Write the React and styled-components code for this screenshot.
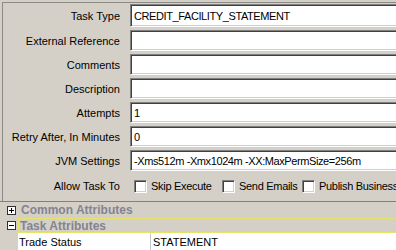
import React from "react";
import styled, { createGlobalStyle } from "styled-components";

const GlobalStyle = createGlobalStyle`
  html, body {
    margin: 0;
    padding: 0;
    background: #d4d0c8;
    overflow: hidden;
  }
  body {
    font-family: "Liberation Sans", Arial, sans-serif;
    font-size: 11px;
    color: #000;
  }
`;

const Screen = styled.div`
  width: 396px;
  height: 250px;
  overflow: hidden;
  display: flex;
  flex-direction: column;
`;

const FormPanel = styled.div`
  margin: 2px 0 0 2px;
  border-top: 1px solid #8c8a84;
  border-left: 1px solid #8c8a84;
  height: 199px;
  box-sizing: border-box;
  padding-top: 1px;
  display: grid;
  grid-template-columns: 117px 1fr;
  column-gap: 10px;
  row-gap: 3px;
  grid-auto-rows: 21px;
  grid-template-rows: 23px;
`;

const Label = styled.div`
  display: flex;
  align-items: center;
  justify-content: flex-end;
  white-space: nowrap;
  margin-top: ${({ $offset }) => $offset || 0}px;
`;

const Field = styled.div`
  box-sizing: border-box;
  background: #fff;
  border: 1px solid;
  border-color: #808080 #ffffff #ffffff #808080;
  box-shadow: inset 1px 1px #404040, inset -1px -1px #d4d0c8;
  padding: 0 3px;
  display: flex;
  align-items: center;
  white-space: nowrap;
  overflow: hidden;
  letter-spacing: ${({ $tight }) => ($tight ? "-0.4px" : "0")};
`;

const CheckRow = styled.div`
  display: flex;
  align-items: center;
  padding-left: 4px;
  margin-top: 3px;
  white-space: nowrap;
  letter-spacing: -0.3px;
`;

const CheckItem = styled.label`
  display: flex;
  align-items: center;
  width: ${({ $w }) => ($w ? `${$w}px` : "auto")};
  flex-shrink: 0;
`;

const Check = styled.span`
  box-sizing: border-box;
  width: 13px;
  height: 13px;
  background: #fff;
  border: 1px solid;
  border-color: #808080 #ffffff #ffffff #808080;
  box-shadow: inset 1px 1px #404040, inset -1px -1px #d4d0c8;
  margin-right: 4px;
  flex-shrink: 0;
`;

const AttrPanel = styled.div`
  border-top: 1px solid #808080;
  display: flex;
  flex-direction: column;
`;

const Section = styled.div`
  display: flex;
  align-items: center;
  height: ${({ $h }) => $h}px;
`;

const Toggle = styled.span`
  box-sizing: border-box;
  width: 9px;
  height: 9px;
  margin: 0 3px 0 7px;
  border: 1px solid #303030;
  background: #fff;
  position: relative;
  flex-shrink: 0;
  &::before {
    content: "";
    position: absolute;
    left: 1px;
    top: 3px;
    width: 5px;
    height: 1px;
    background: #000;
  }
  &::after {
    content: "";
    display: ${({ $open }) => ($open ? "none" : "block")};
    position: absolute;
    left: 3px;
    top: 1px;
    width: 1px;
    height: 5px;
    background: #000;
  }
`;

const SectionTitle = styled.div`
  flex: 1;
  align-self: stretch;
  display: flex;
  align-items: center;
  padding-left: 1px;
  font-weight: bold;
  font-size: 12px;
  color: #85838f;
  box-sizing: border-box;
  border: 1px solid ${({ $active }) => ($active ? "#e6e36a" : "transparent")};
  border-right: none;
  margin-left: ${({ $active }) => ($active ? "-1px" : "0")};
`;

const PropRow = styled.div`
  margin-left: 18px;
  height: 17px;
  background: #fff;
  display: grid;
  grid-template-columns: 132px 1fr;
`;

const PropName = styled.div`
  padding-left: 1px;
  display: flex;
  align-items: center;
`;

const PropValue = styled.div`
  border-left: 1px solid #c8c8c8;
  padding-left: 2px;
  display: flex;
  align-items: center;
`;

const fields = [
  ["Task Type", "CREDIT_FACILITY_STATEMENT"],
  ["External Reference", ""],
  ["Comments", ""],
  ["Description", ""],
  ["Attempts", "1"],
  ["Retry After, In Minutes", "0"],
  ["JVM Settings", "-Xms512m -Xmx1024m -XX:MaxPermSize=256m"],
];

const options = [
  ["Skip Execute", 88],
  ["Send Emails", 80],
  ["Publish Business", 0],
];

export default function App() {
  return (
    <>
      <GlobalStyle />
      <Screen>
        <FormPanel>
          {fields.map(([label, value]) => (
            <React.Fragment key={label}>
              <Label>{label}</Label>
              <Field $tight={value.length > 20}>{value}</Field>
            </React.Fragment>
          ))}
          <Label $offset={3}>Allow Task To</Label>
          <CheckRow>
            {options.map(([text, w]) => (
              <CheckItem key={text} $w={w}>
                <Check />
                {text}
              </CheckItem>
            ))}
          </CheckRow>
        </FormPanel>
        <AttrPanel>
          <Section $h={16}>
            <Toggle />
            <SectionTitle>Common Attributes</SectionTitle>
          </Section>
          <Section $h={15}>
            <Toggle $open />
            <SectionTitle $active>Task Attributes</SectionTitle>
          </Section>
          <PropRow>
            <PropName>Trade Status</PropName>
            <PropValue>STATEMENT</PropValue>
          </PropRow>
        </AttrPanel>
      </Screen>
    </>
  );
}
